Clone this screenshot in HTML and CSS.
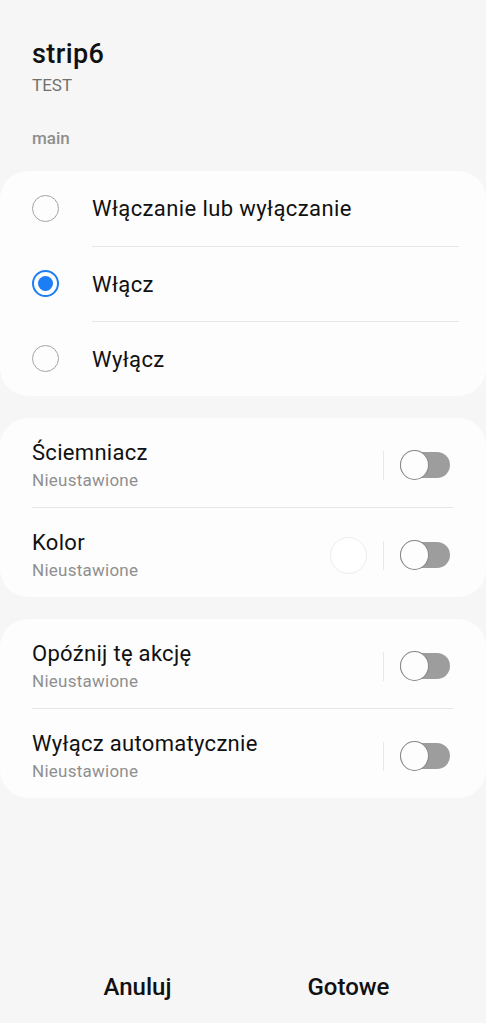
FILE: index.html
```html
<!DOCTYPE html>
<html lang="pl">
<head>
  <meta charset="UTF-8" />
  <meta name="viewport" content="width=device-width, initial-scale=1.0" />
  <title>strip6</title>
  <link rel="stylesheet" href="styles.css">
</head>
<body>
  <div class="header">
    <h1 class="title">strip6</h1>
    <p class="subtitle">TEST</p>
  </div>

  <p class="section-label">main</p>

  <div class="card">
    <div class="option">
      <span class="radio"></span>
      <span class="option-label">Włączanie lub wyłączanie</span>
    </div>
    <div class="option">
      <span class="radio checked"></span>
      <span class="option-label">Włącz</span>
    </div>
    <div class="option">
      <span class="radio"></span>
      <span class="option-label">Wyłącz</span>
    </div>
  </div>

  <div class="card settings">
    <div class="setting">
      <div class="setting-text">
        <div class="setting-title">Ściemniacz</div>
        <div class="setting-value">Nieustawione</div>
      </div>
      <span class="vline"></span>
      <span class="toggle"><span class="thumb"></span></span>
    </div>
    <div class="setting">
      <div class="setting-text">
        <div class="setting-title">Kolor</div>
        <div class="setting-value">Nieustawione</div>
      </div>
      <span class="swatch"></span>
      <span class="vline"></span>
      <span class="toggle"><span class="thumb"></span></span>
    </div>
  </div>

  <div class="card settings">
    <div class="setting">
      <div class="setting-text">
        <div class="setting-title">Opóźnij tę akcję</div>
        <div class="setting-value">Nieustawione</div>
      </div>
      <span class="vline"></span>
      <span class="toggle"><span class="thumb"></span></span>
    </div>
    <div class="setting">
      <div class="setting-text">
        <div class="setting-title">Wyłącz automatycznie</div>
        <div class="setting-value">Nieustawione</div>
      </div>
      <span class="vline"></span>
      <span class="toggle"><span class="thumb"></span></span>
    </div>
  </div>

  <div class="footer">
    <button class="footer-btn">Anuluj</button>
    <button class="footer-btn">Gotowe</button>
  </div>
</body>
</html>
```

FILE: styles.css
```css
* {
  box-sizing: border-box;
}

html, body {
  height: 100%;
}

body {
  font-family: Roboto, "Noto Sans", sans-serif;
  background: #f6f6f6;
  color: #111;
  margin: 0;
  display: flex;
  flex-direction: column;
  overflow: hidden;
}

.header {
  padding: 38px 32px 0;
}

.title {
  font-size: 27px;
  line-height: 32px;
  font-weight: 500;
  letter-spacing: 0.4px;
  margin: 0;
}

.subtitle {
  font-size: 17px;
  line-height: 22px;
  color: #707070;
  margin: 4px 0 0;
}

.section-label {
  font-size: 17px;
  line-height: 22px;
  font-weight: 500;
  color: #8e8e8e;
  margin: 31px 32px 22px;
}

.card {
  background: #fdfdfd;
  border-radius: 28px;
  margin: 0 0 22px;
  padding: 0 27px 0 32px;
}

.option {
  display: flex;
  align-items: center;
  height: 75px;
}

.radio {
  flex: none;
  width: 27px;
  height: 27px;
  border: 1.5px solid #a3a3a3;
  border-radius: 50%;
  margin-right: 33px;
  display: flex;
  align-items: center;
  justify-content: center;
}

.radio.checked {
  border: 2px solid #1b7ef5;
}

.radio.checked::after {
  content: "";
  width: 15px;
  height: 15px;
  border-radius: 50%;
  background: #1b7ef5;
}

.option-label {
  flex: 1;
  height: 100%;
  display: flex;
  align-items: center;
  font-size: 22px;
  letter-spacing: 0.4px;
}

.option + .option .option-label {
  border-top: 1px solid #e6e6e6;
}

.settings {
  padding: 0 33px 0 32px;
}

.setting {
  display: flex;
  align-items: center;
  padding: 21px 0 16px;
}

.setting + .setting {
  border-top: 1px solid #e6e6e6;
}

.setting-text {
  flex: 1;
}

.setting-title {
  font-size: 22px;
  line-height: 28px;
  letter-spacing: 0.3px;
}

.setting-value {
  font-size: 17px;
  line-height: 22px;
  color: #8f8f8f;
  letter-spacing: 0.25px;
  margin-top: 2px;
}

.swatch {
  width: 37px;
  height: 37px;
  border-radius: 50%;
  border: 1px solid #ececec;
  background: #fff;
  margin-right: 16px;
}

.vline {
  width: 1px;
  height: 29px;
  background: #e8e8e8;
  margin-right: 16px;
}

.toggle {
  position: relative;
  width: 50px;
  height: 26px;
  border-radius: 13px;
  background: #9d9d9d;
  margin-right: 3px;
}

.thumb {
  position: absolute;
  left: 0;
  top: -2px;
  width: 29px;
  height: 30px;
  border-radius: 50%;
  background: #fdfdfd;
  border: 1.5px solid #858585;
}

.footer {
  margin-top: auto;
  display: flex;
  padding: 0 32px 22px;
}

.footer-btn {
  flex: 1;
  background: none;
  border: none;
  font-family: inherit;
  font-size: 24px;
  line-height: 28px;
  font-weight: 500;
  color: #111;
  padding: 0;
}
```
